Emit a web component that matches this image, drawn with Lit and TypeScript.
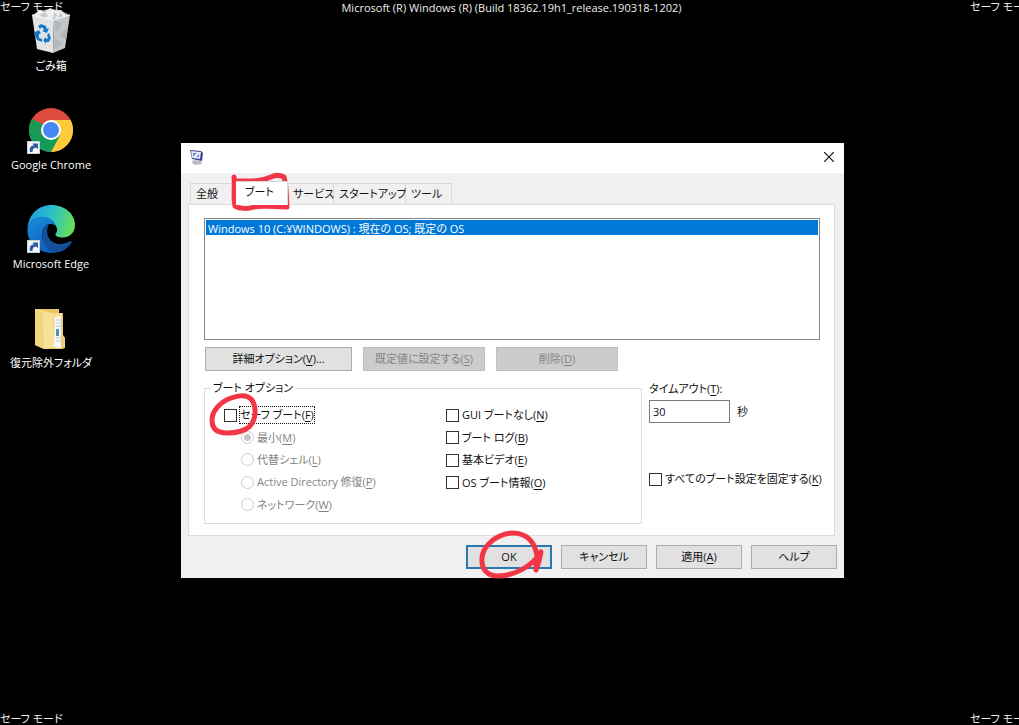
import { LitElement, html, svg, css } from "lit";
import { customElement, property, state } from "lit/decorators.js";
import { classMap } from "lit/directives/class-map.js";

const shortcutArrow = svg`
  <rect x="0.5" y="35.500" width="12" height="12" fill="#f4f6f9" stroke="#c9ced6"/>
  <path d="M3 46 C2 41 4.500 39.500 7 39.600 L5.500 37.500 H11 V43 L9 41.600 C6.500 42 5.500 43 5.500 46 Z" fill="#2c5a9c"/>`;

const binIcon = html`<svg viewBox="0 0 48 48" aria-hidden="true">
  <path d="M5 8 L14 4 L22 2 L32 3 L43 8 L37 14 L10 13 Z" fill="#b9bcbf"/>
  <path d="M7 8 L12 3 L18 5 L23 1 L29 4 L34 3 L40 9 L34 13 L27 11 L20 14 L12 12 Z" fill="#eceeef"/>
  <path d="M13 8 L18 5 L21 9 L16 12 Z M27 5 L31 9 L26 11 Z M34 5 L36 10 L31 11 Z" fill="#c6c9cc"/>
  <path d="M5 8 L27 13 L26 46 L10 42 Z" fill="#e2e4e6"/>
  <path d="M27 13 L43 8 L38 41 L26 46 Z" fill="#c3c6c9"/>
  <path d="M27 13 L36 17 L29 26 Z M41 19 L32 28 L39 33 Z M28 31 L35 36 L27 43 Z" fill="#b3b7ba"/>
  <path d="M5 8 L27 13 L43 8" fill="none" stroke="#f8f8f8"/>
  <g fill="#1878c8">
    <path d="M11 19 L14 17 L19 19 L20 22 L22 21 L20 26 L15 24 L17 23 L15 20 L13 22 Z"/>
    <path d="M8 25 L12 23 L14 27 L12 27 L12 31 L15 32 L15 35 L10 33 L8 29 L7 28 Z"/>
    <path d="M22 26 L24 31 L22 35 L19 35 L19 37 L16 33 L19 30 L19 32 L21 31 L20 28 Z"/>
  </g>
</svg>`;

const chromeIcon = html`<svg viewBox="0 0 48 48" aria-hidden="true">
  <g transform="translate(-2 0)">
    <circle cx="26" cy="24" r="22" fill="#dd4b3e"/>
    <path d="M6.950 13 A22 22 0 0 0 26 46 L35.500 29.500 H26 L16.500 29.500 Z" fill="#159b58"/>
    <path d="M26 14 H45.600 A22 22 0 0 1 26 46 L35 29.500 Z" fill="#fecb3a"/>
    <path d="M6.950 13 L16.500 29.500 L19 19 Z" fill="#159b58"/>
    <circle cx="26" cy="24" r="10" fill="#fff"/>
    <circle cx="26" cy="24" r="8" fill="#4687f4"/>
  </g>
  ${shortcutArrow}
</svg>`;

const edgeIcon = html`<svg viewBox="0 0 48 48" aria-hidden="true">
  <defs>
    <linearGradient id="edge-top" x1="0" y1="0.300" x2="1" y2="0.500">
      <stop offset="0" stop-color="#1c9fe0"/><stop offset="0.500" stop-color="#2dc2c6"/><stop offset="1" stop-color="#6add58"/>
    </linearGradient>
    <linearGradient id="edge-left" x1="0" y1="0" x2="0.500" y2="1">
      <stop offset="0" stop-color="#1b8ee0"/><stop offset="1" stop-color="#0d62b8"/>
    </linearGradient>
  </defs>
  <path d="M0.500 25 C1 9 12 0 24 0 C38 0 48 9 48 20 C48 28 42 32.500 36 32.500 C31 32.500 28 31 28.500 29 C30 27 31 25 29 21 C26 15 20 12 14 12 C7 12 2 17 0.500 25 Z" fill="url(#edge-top)"/>
  <path d="M0.500 25 C2 16 8 11.500 15 11.500 C22 11.500 28 16 29 21 C22 16 15 21 15 30 C15 38 21 45 29 47.500 C12 50 0 38 0.500 25 Z" fill="url(#edge-left)"/>
  <path d="M15 30 C15 24 18 20 22 19.500 C18 25 20 38 32 39 C38 39.500 42 36 44 36 C45 36 45 37 44 38.500 C40 44 34 48 28 47.500 C20 45 15 38 15 30 Z" fill="#134f9c"/>
  ${shortcutArrow}
</svg>`;

const folderIcon = html`<svg viewBox="0 0 48 48" aria-hidden="true">
  <path d="M8 5 H32 V9 H36 V32 L38 34 V44 L35 45 H17 Z" fill="#e9c768"/>
  <path d="M16 9 H35 V44 H19 Z" fill="#f8dc8b"/>
  <path d="M28 13 L34 12 V44 L27 43 Z" fill="#f4f8fb"/>
  <path d="M29 16 H34 M29 19 H34 M29 22 H34 M29 34 H34 M29 37 H34" stroke="#b7cbd8"/>
  <path d="M29 25 H32 V32 H29 Z" fill="#4c93ba"/>
  <path d="M34 11 H36 V31 L38 34 V44 L34 44 Z" fill="#efcf76"/>
  <path d="M8 5 L25 9 L27 43 L17 45 L8 41 Z" fill="#fae19a"/>
  <path d="M8 5 L16 8 L17 45 L8 41 Z" fill="#f2d382"/>
</svg>`;

@customElement("desktop-shortcut")
export class DesktopShortcut extends LitElement {
  @property() label = "";
  @property({ attribute: false }) icon: unknown = null;

  static styles = css`
    :host { display: block; }
    .shortcut {
      display: flex;
      flex-direction: column;
      align-items: center;
      gap: 3px;
      color: #fff;
      text-decoration: none;
      line-height: 16px;
      white-space: nowrap;
    }
    svg { display: block; width: 48px; height: 48px; }
  `;

  render() {
    return html`<a class="shortcut" href="#">${this.icon}<span>${this.label}</span></a>`;
  }
}

interface Choice { text: string; key: string; }

const TABS = ["全般", "ブート", "サービス", "スタートアップ", "ツール"];
const MODES: Choice[] = [
  { text: "最小", key: "M" },
  { text: "代替シェル", key: "L" },
  { text: "Active Directory 修復", key: "P" },
  { text: "ネットワーク", key: "W" },
];
const FLAGS: Choice[] = [
  { text: "GUI ブートなし", key: "N" },
  { text: "ブート ログ", key: "B" },
  { text: "基本ビデオ", key: "E" },
  { text: "OS ブート情報", key: "O" },
];

const keyed = (text: string, key: string, tail = "") => html`<span>${text}(<u>${key}</u>)${tail}</span>`;

@customElement("config-dialog")
export class ConfigDialog extends LitElement {
  @state() private tab = 1;

  static styles = css`
    :host {
      display: block;
      position: relative;
      background: #f0f0f0;
      color: #111;
      line-height: 16px;
      white-space: nowrap;
    }
    button, input, select { font: inherit; font-feature-settings: inherit; color: inherit; margin: 0; box-sizing: border-box; }
    u { text-underline-offset: 2px; }
    .title {
      display: flex;
      justify-content: space-between;
      align-items: center;
      height: 28px;
      padding: 0 8px 2px;
      background: #fff;
    }
    .title svg { display: block; }
    .close { display: flex; padding: 2px; border: 0; background: none; }
    .body { padding: 8px 7px 9px; }
    .tabs { display: flex; align-items: flex-end; padding-left: 2px; }
    .tab {
      height: 21px;
      padding: 0 0 0 5px;
      border: 1px solid #d9d9d9;
      border-width: 1px 1px 0 0;
      background: #f0f0f0;
      width: 46px;
      text-align: left;
    }
    .tab:first-child { border-left-width: 1px; }
    .tab.wide { width: 72px; }
    .tab.active { width: 52px; height: 24px; margin-bottom: -1px; padding: 0 0 4px 9px; background: #fff; z-index: 1; }
    .panel { margin-right: 2px; padding: 13px 14px 11px 15px; border: 1px solid #dcdcdc; background: #fff; }
    .entries {
      display: block;
      width: 100%;
      height: 122px;
      padding: 1px;
      border: 1px solid #828790;
      border-radius: 0;
      background: #fff;
      overflow: hidden;
      outline: 0;
    }
    .entries option { min-height: 0; height: 15px; padding: 0 2px; line-height: 15px; }
    .entries option:checked { background: #0078d7 linear-gradient(#0078d7, #0078d7); color: #fff; }
    .actions { display: flex; gap: 11px; padding: 7px 0 9px 1px; }
    .push {
      width: 122px;
      height: 24px;
      padding: 0;
      border: 1px solid #adadad;
      border-radius: 0;
      background: #e1e1e1;
    }
    .push.long { width: 147px; }
    .push.foot { width: 86px; }
    .push.default { border: 2px solid #2779b0; }
    .push:disabled { background: #ccc; border-color: #bfbfbf; color: #838383; }
    .columns { display: flex; gap: 7px; }
    .group {
      box-sizing: border-box;
      flex: 1;
      min-width: 0;
      margin: 0;
      padding: 8px 0 7px 19px;
      border: 1px solid #dcdcdc;
    }
    .group legend { margin-left: -13px; padding: 0 2px; }
    .options { display: grid; grid-template-columns: 222px 1fr; height: 112px; }
    .list { display: grid; grid-auto-rows: 1fr; align-items: center; justify-items: start; }
    .flags { height: 90px; }
    .choice { display: flex; align-items: center; gap: 3px; }
    .mode { padding-left: 17px; color: #838383; }
    input[type="checkbox"], input[type="radio"] {
      appearance: none;
      flex: none;
      width: 13px;
      height: 13px;
      border: 1px solid #333;
      background: #fff;
    }
    input[type="radio"] { border-color: #ccc; border-radius: 50%; }
    input[type="radio"]:checked { background: radial-gradient(circle, #c4c4c4 3px, #fff 4px); }
    .focused span { outline: 1px dotted #111; }
    .side { display: flex; flex-direction: column; align-items: flex-start; width: 171px; padding-top: 1px; }
    .timeout { display: flex; align-items: center; gap: 7px; padding: 3px 0 48px; }
    .timeout input { width: 81px; height: 23px; padding: 0 3px; border: 1px solid #7a7a7a; border-radius: 0; }
    .footer { display: flex; justify-content: flex-end; gap: 9px; padding-top: 9px; }
    .marks { position: absolute; top: 0; left: 0; overflow: visible; pointer-events: none; }
  `;

  render() {
    return html`
      <header class="title">
        <svg width="16" height="16" viewBox="0 0 16 16" aria-hidden="true">
          <path d="M4 11 L12 12 L13 15 L6 16 L3 14 Z" fill="#b9bcc8"/>
          <path d="M1 1 L12 2 L14 4 L13 12 L3 10 Z" fill="#35418f"/>
          <path d="M2 2 L12 3 L11 10 L3 9 Z" fill="#dfe7f8"/>
          <path d="M4 4 L10 4 L10 8 L4 8 Z" fill="#6f8fd6"/>
          <path d="M4 8 L9 3 L10 5 L7 8 Z" fill="#f7f9ff"/>
        </svg>
        <button class="close" aria-label="閉じる">
          <svg width="10" height="10" viewBox="0 0 10 10"><path d="M0 0 L10 10 M10 0 L0 10" stroke="#111" stroke-width="1.200"/></svg>
        </button>
      </header>
      <div class="body">
        <div class="tabs" role="tablist">
          ${TABS.map((name, i) => html`<button role="tab" aria-selected=${i === this.tab}
            class=${classMap({ tab: true, active: i === this.tab, wide: i === 3 })}
            @click=${() => (this.tab = i)}>${name}</button>`)}
        </div>
        <section class="panel">
          <select class="entries" size="7" aria-label="OS">
            <option selected>Windows 10 (C:¥WINDOWS) : 現在の OS; 既定の OS</option>
          </select>
          <div class="actions">
            <button class="push long">${keyed("詳細オプション", "V", "...")}</button>
            <button class="push" disabled>${keyed("既定値に設定する", "S")}</button>
            <button class="push" disabled>${keyed("削除", "D")}</button>
          </div>
          <div class="columns">
            <fieldset class="group">
              <legend>ブート オプション</legend>
              <div class="options">
                <div class="list">
                  <label class="choice focused"><input type="checkbox">${keyed("セーフ ブート", "F")}</label>
                  ${MODES.map((m, i) => html`<label class="choice mode"><input type="radio" name="mode" disabled ?checked=${i === 0}>${keyed(m.text, m.key)}</label>`)}
                </div>
                <div class="list flags">
                  ${FLAGS.map((f) => html`<label class="choice"><input type="checkbox">${keyed(f.text, f.key)}</label>`)}
                </div>
              </div>
            </fieldset>
            <div class="side">
              <label for="timeout">${keyed("タイムアウト", "T", ":")}</label>
              <div class="timeout"><input id="timeout" type="text" value="30"><span>秒</span></div>
              <label class="choice"><input type="checkbox">${keyed("すべてのブート設定を固定する", "K")}</label>
            </div>
          </div>
        </section>
        <footer class="footer">
          <button class="push foot default">OK</button>
          <button class="push foot">キャンセル</button>
          <button class="push foot">${keyed("適用", "A")}</button>
          <button class="push foot">ヘルプ</button>
        </footer>
      </div>
      <svg class="marks" width="663" height="435" viewBox="0 0 663 435" fill="none" stroke="#f23645" stroke-width="5" stroke-linecap="round" stroke-linejoin="round" aria-hidden="true">
        <path d="M53 34 C54 44 52 54 54 63 C59 66 67 66 73 64 C84 62 95 64 106 64 C105 54 106 44 103 34 C99 32 94 32 90 34 C79 39 67 38 55 38"/>
        <path d="M71 257 C66 251 58 252 50 255 C39 259 31 268 31 277 C31 287 38 290 46 290 C55 290 63 288 68 284 C75 278 76 265 71 257"/>
        <path d="M356 414 C355 400 346 390 332 390 C317 390 302 402 301 415 C300 427 307 433 317 433 C332 433 351 424 360 409 C359 416 357 422 355 427 C355 422 355 418 356 414"/>
      </svg>`;
  }
}

@customElement("app-root")
export class AppRoot extends LitElement {
  static styles = css`
    :host {
      display: block;
      position: relative;
      min-height: 100vh;
      overflow: hidden;
      background: #000;
      color: #eee;
      font-family: "Open Sans", "Noto Sans CJK JP", sans-serif;
      font-size: 11px;
      font-feature-settings: "palt";
      line-height: 16px;
    }
    .build { text-align: center; padding-left: 4px; }
    .corner { position: absolute; width: 49px; line-height: 12px; white-space: nowrap; }
    .top { top: 1px; }
    .bottom { bottom: 0; }
    .left { left: 0; }
    .right { right: 0; }
    .shortcuts { display: grid; gap: 32px; width: 102px; margin-top: -9px; }
    .dialog { position: absolute; top: 143px; left: 181px; width: 663px; }
  `;

  render() {
    return html`
      <div class="build">Microsoft (R) Windows (R) (Build 18362.19h1_release.190318-1202)</div>
      <nav class="shortcuts">
        <desktop-shortcut label="ごみ箱" .icon=${binIcon}></desktop-shortcut>
        <desktop-shortcut label="Google Chrome" .icon=${chromeIcon}></desktop-shortcut>
        <desktop-shortcut label="Microsoft Edge" .icon=${edgeIcon}></desktop-shortcut>
        <desktop-shortcut label="復元除外フォルダ" .icon=${folderIcon}></desktop-shortcut>
      </nav>
      ${["top left", "top right", "bottom left", "bottom right"].map((place) => html`<span class="corner ${place}">セーフ モード</span>`)}
      <config-dialog class="dialog"></config-dialog>`;
  }
}
